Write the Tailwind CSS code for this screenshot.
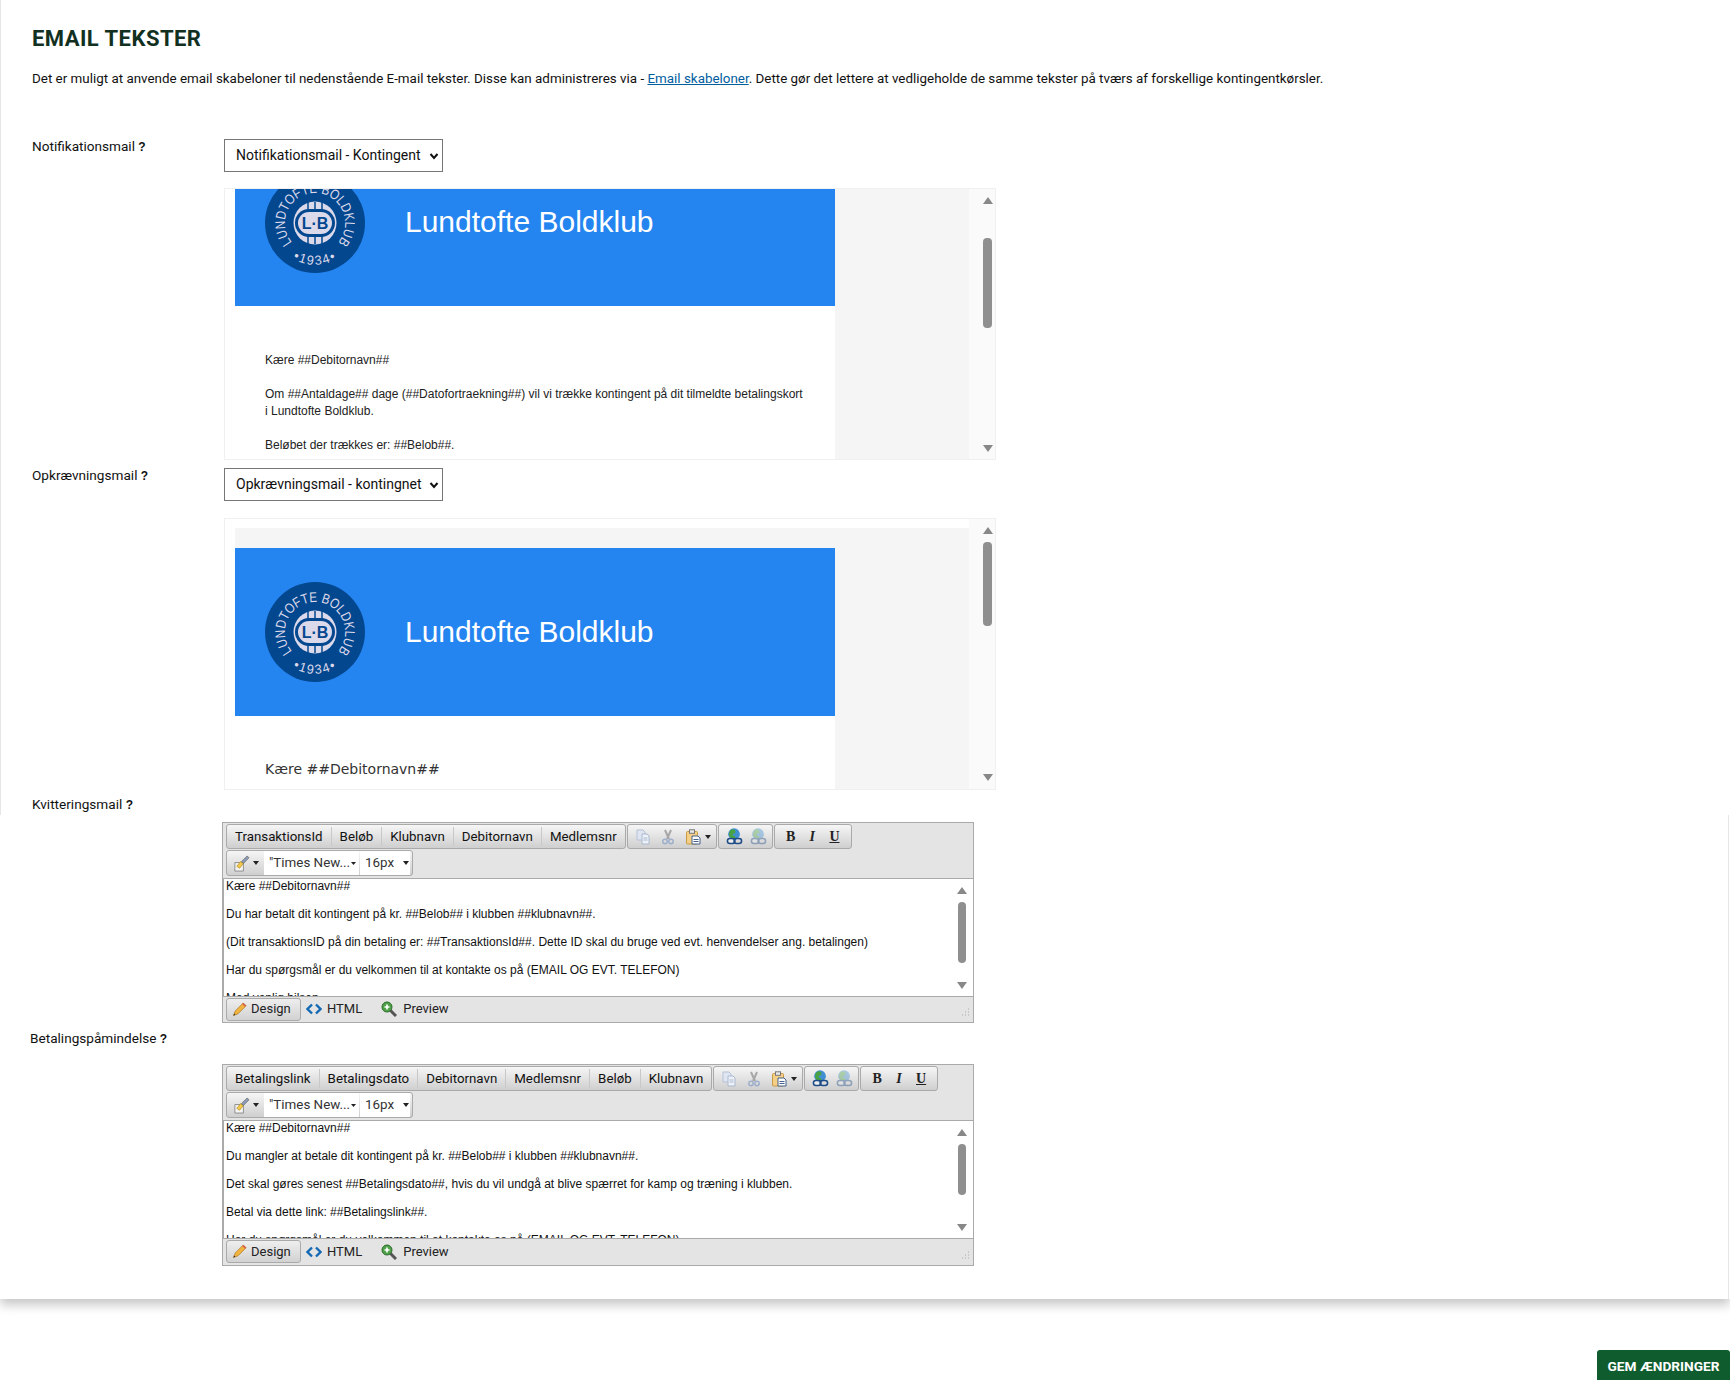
<!DOCTYPE html>
<html lang="da"><head><meta charset="utf-8"><title>Email tekster</title>
<script src="https://cdn.jsdelivr.net/npm/@tailwindcss/browser@4"></script></head>
<body class="bg-white font-['Roboto',sans-serif] text-[13.6px] text-[#111] h-[1380px] overflow-hidden relative">
<svg class="hidden" width="0" height="0">
<defs>
<symbol id="logo" viewBox="0 0 100 100">
<circle cx="50" cy="50" r="50" fill="#03478f"/>
<path id="arcT" d="M27 69.300 A30 30 0 1 1 73 69.300" fill="none"/>
<path id="arcB" d="M23 82 A42 42 0 0 0 77 82" fill="none"/>
<text font-family="Liberation Sans" font-size="14" fill="#dcd9ea" textLength="136" lengthAdjust="spacingAndGlyphs"><textPath href="#arcT" textLength="136" lengthAdjust="spacingAndGlyphs">LUNDTOFTE BOLDKLUB</textPath></text>
<text font-family="Liberation Sans" font-size="13" fill="#dcd9ea" letter-spacing="1.500"><textPath href="#arcB" startOffset="50%" text-anchor="middle">•1934•</textPath></text>
<circle cx="50" cy="50" r="21.500" fill="#dcd9ea"/>
<path d="M43 29v42M50 29v42M57 29v42" stroke="#03478f" stroke-width="1.500"/>
<rect x="30" y="36" width="40" height="28" rx="14" fill="#03478f"/>
<rect x="33" y="39" width="34" height="22" rx="11" fill="#dcd9ea"/>
<text x="50" y="56" text-anchor="middle" font-family="Liberation Sans" font-weight="700" font-size="16" fill="#03478f">L·B</text>
</symbol>
<symbol id="copy" viewBox="0 0 16 16"><path d="M2 1h6l2 2v8H2z" fill="#dfe6f2" stroke="#b6c2d6"/><path d="M7 5h5l2 2v8H7z" fill="#eef2f8" stroke="#a9b8d0"/><path d="M8.500 9h4M8.500 11h4" stroke="#a9b8d0"/></symbol>
<symbol id="cut" viewBox="0 0 16 16"><path d="M5 1l4 9M11 1L7 10" stroke="#a7a7a7" stroke-width="2"/><circle cx="5" cy="12.500" r="2.200" fill="none" stroke="#9fb0cc" stroke-width="1.500"/><circle cx="11" cy="12.500" r="2.200" fill="none" stroke="#9fb0cc" stroke-width="1.500"/></symbol>
<symbol id="paste" viewBox="0 0 16 16"><rect x="1.500" y="2.500" width="11" height="12.500" rx="1" fill="#f4cf85" stroke="#c99a45"/><rect x="4.500" y=".8" width="5" height="3.500" fill="#e9e9e9" stroke="#777"/><path d="M7 7h6l2 2v6H7z" fill="#fff" stroke="#45618c"/><path d="M8.500 10.500h5M8.500 12.500h5" stroke="#45618c"/></symbol>
<symbol id="link" viewBox="0 0 18 18"><circle cx="8.500" cy="6.500" r="6.200" fill="#3f8fd2"/><path d="M5 2c2-1 5-1 5 2S7 5 7 7s3 1 3 3l-3 2C3 10 2 5 5 2z" fill="#4aa343"/><rect x="1.500" y="11" width="8" height="5.500" rx="2.700" fill="#ffffff80" stroke="#1d4c86" stroke-width="1.600"/><rect x="8.500" y="11" width="8" height="5.500" rx="2.700" fill="none" stroke="#1d4c86" stroke-width="1.600"/></symbol>
<symbol id="brush" viewBox="0 0 18 18"><path d="M2 8h9v9H2z" fill="#f4f4f4" stroke="#8a8a8a"/><path d="M4 12l4-5 3 2-4 5z" fill="#f2c94c" stroke="#b58a1c" stroke-width=".7"/><path d="M9 7l6-6 2 2-6 6z" fill="#8c9db8" stroke="#555" stroke-width=".6"/></symbol>
<symbol id="pencil" viewBox="0 0 16 16"><path d="M1.500 14.500l2-5L12 1l3 3-8.500 8.500z" fill="#f0b43f" stroke="#a8701a" stroke-width=".7"/><path d="M11 2l3 3 1-1-3-3z" fill="#d9534f"/><path d="M1.500 14.500l.8-2.200 1.400 1.400z" fill="#333"/></symbol>
<symbol id="code" viewBox="0 0 16 12"><path d="M6 1.500L1.500 6 6 10.500M10 1.500L14.500 6 10 10.500" fill="none" stroke="#1469b4" stroke-width="2.400"/></symbol>
<symbol id="zoomi" viewBox="0 0 16 16"><path d="M9 9l6 6" stroke="#555" stroke-width="3"/><circle cx="6" cy="6" r="5" fill="#4fa24a" stroke="#2b6b2b"/><path d="M3.500 6h5M6 3.500v5" stroke="#fff" stroke-width="1.700"/></symbol>
</defs></svg>

<main class="h-[1299px] shadow-[0_6px_10px_rgba(0,0,0,0.22)]">
<div class="h-[815px] border-l border-[#e6e6e6] pl-[31px] pt-[25px]">
<h1 class="font-bold text-[22px] leading-[28px] text-[#12301f] tracking-[0.45px]">EMAIL TEKSTER</h1>
<p class="mt-[16px] leading-[20px] text-[13.4px]">Det er muligt at anvende email skabeloner til nedenstående E-mail tekster. Disse kan administreres via - <a class="text-[#005d9e] underline" href="#">Email skabeloner</a>. Dette gør det lettere at vedligeholde de samme tekster på tværs af forskellige kontingentkørsler.</p>

<section class="mt-[50px] flex">
<div class="w-[192px] leading-[20px] -mt-[3px]">Notifikationsmail <b class="font-['Liberation_Sans'] text-[12px] font-bold">?</b></div>
<div class="w-[772px]">
<div class="w-[219px] h-[33px] border border-[#767676] flex items-center justify-between pl-[11px] pr-[3px] text-[14px]"><span>Notifikationsmail - Kontingent</span><svg width="10" height="10" viewBox="0 0 10 10"><path d="M1.500 3L5 7l3.500-4" fill="none" stroke="#111" stroke-width="2"/></svg></div>
<div class="mt-[16px] h-[272px] border border-[#f0f0f0] flex overflow-hidden">
<div class="w-[745px] h-full overflow-hidden bg-white pl-[10px]"><div class="h-full bg-[#f5f5f5]">
<div class="w-[600px] h-full bg-white overflow-hidden">
<div class="h-[117px] bg-[#2585f0] flex items-start overflow-hidden"><svg class="w-[100px] h-[100px] ml-[30px] -mt-[16px] shrink-0"><use href="#logo"/></svg><span class="ml-[40px] mt-[15px] font-['Liberation_Sans'] text-[30px] leading-[36px] text-white">Lundtofte Boldklub</span></div>
<div class="font-['Liberation_Sans'] text-[12px] leading-[17px] text-[#222] pl-[30px] pr-[30px] pt-[46px]">
<p>Kære ##Debitornavn##</p>
<p class="mt-[17px]">Om ##Antaldage## dage (##Datofortraekning##) vil vi trække kontingent på dit tilmeldte betalingskort i Lundtofte Boldklub.</p>
<p class="mt-[17px]">Beløbet der trækkes er: ##Belob##.</p>
</div></div></div></div>
<div class="w-[26px] bg-[#fafafa] pl-[14px] flex flex-col pt-[8px]">
<svg width="10" height="7" viewBox="0 0 10 7"><path d="M5 0l5 7H0z" fill="#888"/></svg>
<div class="w-[9px] h-[90px] mt-[34px] rounded-[4px] bg-[#8f8f8f]"></div>
<svg class="mt-[117px]" width="10" height="7" viewBox="0 0 10 7"><path d="M5 7L10 0H0z" fill="#888"/></svg>
</div></div>
</div></section>

<section class="mt-[8px] flex">
<div class="w-[192px] leading-[20px] -mt-[3px]">Opkrævningsmail <b class="font-['Liberation_Sans'] text-[12px] font-bold">?</b></div>
<div class="w-[772px]">
<div class="w-[219px] h-[33px] border border-[#767676] flex items-center justify-between pl-[11px] pr-[3px] text-[14px]"><span>Opkrævningsmail - kontingnet</span><svg width="10" height="10" viewBox="0 0 10 10"><path d="M1.500 3L5 7l3.500-4" fill="none" stroke="#111" stroke-width="2"/></svg></div>
<div class="mt-[17px] h-[272px] border border-[#f0f0f0] flex overflow-hidden">
<div class="w-[745px] h-full overflow-hidden pt-[9px] pl-[10px]"><div class="h-full bg-[#f5f5f5] pt-[20px]">
<div class="w-[600px] h-full bg-white">
<div class="h-[168px] bg-[#2585f0] flex items-center"><svg class="w-[100px] h-[100px] ml-[30px] shrink-0"><use href="#logo"/></svg><span class="ml-[40px] font-['Liberation_Sans'] text-[30px] leading-[36px] text-white">Lundtofte Boldklub</span></div>
<p class="font-['DejaVu_Sans'] text-[14px] leading-[20px] text-[#333] pl-[30px] pt-[43px]">Kære ##Debitornavn##</p>
</div></div></div>
<div class="w-[26px] bg-[#fafafa] pl-[14px] flex flex-col pt-[8px]">
<svg width="10" height="7" viewBox="0 0 10 7"><path d="M5 0l5 7H0z" fill="#888"/></svg>
<div class="w-[9px] h-[84px] mt-[8px] rounded-[4px] bg-[#8f8f8f]"></div>
<svg class="mt-[148px]" width="10" height="7" viewBox="0 0 10 7"><path d="M5 7L10 0H0z" fill="#888"/></svg>
</div></div>
</div></section>

<div class="mt-[4px] leading-[20px]">Kvitteringsmail <b class="font-['Liberation_Sans'] text-[12px] font-bold">?</b></div>
</div>

<div class="h-[484px] border-r border-[#e6e6e6] mr-[1px] pl-[32px]">
<div class="pt-[7px] ml-[190px] w-[752px]">
<div class="h-[201px] border border-[#aaa] bg-[#e4e4e4] flex flex-col">
<div class="flex gap-[1px] h-[27px] pl-[3px] pt-[1px]">
<div class="h-[25px] flex items-center rounded-[3px] border border-[#aaa] bg-linear-to-b from-[#f6f6f6] to-[#cfcfcf] divide-x divide-[#c8c8c8] text-[13.3px]"><span class="px-[8px]">TransaktionsId</span><span class="px-[8px]">Beløb</span><span class="px-[8px]">Klubnavn</span><span class="px-[8px]">Debitornavn</span><span class="px-[8px]">Medlemsnr</span></div>
<div class="h-[25px] flex items-center gap-[9px] pl-[7px] pr-[5px] rounded-[3px] border border-[#aaa] bg-linear-to-b from-[#f6f6f6] to-[#cfcfcf]"><svg class="w-[16px] h-[16px]"><use href="#copy"/></svg><svg class="w-[16px] h-[16px]"><use href="#cut"/></svg><svg class="w-[16px] h-[16px]"><use href="#paste"/></svg><svg class="-ml-[5px]" width="6" height="4"><path d="M0 0h6L3 4z" fill="#222"/></svg></div>
<div class="h-[25px] flex items-center gap-[7px] pl-[7px] pr-[5px] rounded-[3px] border border-[#aaa] bg-linear-to-b from-[#f6f6f6] to-[#cfcfcf]"><svg class="w-[17px] h-[17px]"><use href="#link"/></svg><svg class="w-[17px] h-[17px] opacity-40"><use href="#link"/></svg></div>
<div class="h-[25px] w-[78px] flex items-center justify-around px-[4px] rounded-[3px] border border-[#aaa] bg-linear-to-b from-[#f6f6f6] to-[#cfcfcf] font-['Liberation_Serif'] text-[14px] text-[#222]"><b>B</b><b class="italic">I</b><b class="underline">U</b></div>
</div>
<div class="flex h-[28px] pl-[3px]"><div class="h-[26px] w-[187px] flex items-stretch rounded-[3px] border border-[#aaa] bg-linear-to-b from-[#f6f6f6] to-[#cfcfcf] overflow-hidden text-[13.4px] text-[#333]"><div class="w-[37px] flex items-center pl-[6px] gap-[3px]"><svg class="w-[17px] h-[17px]"><use href="#brush"/></svg><svg width="6" height="4"><path d="M0 0h6L3 4z" fill="#222"/></svg></div><div class="w-[95px] bg-white flex items-center pl-[5px] whitespace-nowrap">"Times New...<svg class="ml-[1px]" width="5" height="3"><path d="M0 0h5L2.500 3z" fill="#222"/></svg></div><div class="w-[50px] ml-[1px] bg-white flex items-center pl-[5px] gap-[9px]">16px<svg width="6" height="4"><path d="M0 0h6L3 4z" fill="#222"/></svg></div></div></div>
<div class="h-[119px] bg-white border border-[#aaa] border-r-0 flex overflow-hidden">
<div class="w-[727px] pl-[2px] font-['Liberation_Sans'] text-[12px] leading-[14px] text-[#111] shrink-0">
<p>Kære ##Debitornavn##</p><p class="mt-[14px]">Du har betalt dit kontingent på kr. ##Belob## i klubben ##klubnavn##.</p><p class="mt-[14px]">(Dit transaktionsID på din betaling er: ##TransaktionsId##. Dette ID skal du bruge ved evt. henvendelser ang. betalingen)</p><p class="mt-[14px]">Har du spørgsmål er du velkommen til at kontakte os på (EMAIL OG EVT. TELEFON)</p><p class="mt-[14px]">Med venlig hilsen</p>
</div>
<div class="flex-1 flex flex-col pl-[6px] pt-[8px]"><svg width="10" height="7" viewBox="0 0 10 7"><path d="M5 0l5 7H0z" fill="#888"/></svg><div class="w-[8px] h-[61px] mt-[8px] ml-[1px] rounded-[4px] bg-[#8f8f8f]"></div><svg class="mt-[19px]" width="10" height="7" viewBox="0 0 10 7"><path d="M5 7L10 0H0z" fill="#888"/></svg></div>
</div>
<div class="h-[24px] flex items-center pl-[3px] relative text-[13px] text-[#222]"><div class="h-[23px] w-[75px] flex items-center gap-[4px] pl-[5px] rounded-[3px] border border-[#aaa] bg-linear-to-b from-[#eee] to-[#d2d2d2]"><svg class="w-[15px] h-[15px]"><use href="#pencil"/></svg><span>Design</span></div><svg class="ml-[5px] w-[16px] h-[12px]"><use href="#code"/></svg><span class="ml-[5px]">HTML</span><svg class="ml-[19px] w-[16px] h-[16px]"><use href="#zoomi"/></svg><span class="ml-[6px]">Preview</span>
<svg class="absolute right-[3px] bottom-[3px]" width="10" height="10"><path d="M8 1h1M5 4h1M8 4h1M2 7h1M5 7h1M8 7h1" stroke="#aaa" stroke-width="1"/></svg></div>
</div>
</div>

<div class="mt-[5px] -ml-[2px] leading-[20px]">Betalingspåmindelse <b class="font-['Liberation_Sans'] text-[12px] font-bold">?</b></div>
<div class="mt-[15px] ml-[190px] w-[752px] h-[202px] border border-[#aaa] bg-[#e4e4e4] flex flex-col">
<div class="flex gap-[1px] h-[27px] pl-[3px] pt-[1px]">
<div class="h-[25px] flex items-center rounded-[3px] border border-[#aaa] bg-linear-to-b from-[#f6f6f6] to-[#cfcfcf] divide-x divide-[#c8c8c8] text-[13.3px]"><span class="px-[8px]">Betalingslink</span><span class="px-[8px]">Betalingsdato</span><span class="px-[8px]">Debitornavn</span><span class="px-[8px]">Medlemsnr</span><span class="px-[8px]">Beløb</span><span class="px-[8px]">Klubnavn</span></div>
<div class="h-[25px] flex items-center gap-[9px] pl-[7px] pr-[5px] rounded-[3px] border border-[#aaa] bg-linear-to-b from-[#f6f6f6] to-[#cfcfcf]"><svg class="w-[16px] h-[16px]"><use href="#copy"/></svg><svg class="w-[16px] h-[16px]"><use href="#cut"/></svg><svg class="w-[16px] h-[16px]"><use href="#paste"/></svg><svg class="-ml-[5px]" width="6" height="4"><path d="M0 0h6L3 4z" fill="#222"/></svg></div>
<div class="h-[25px] flex items-center gap-[7px] pl-[7px] pr-[5px] rounded-[3px] border border-[#aaa] bg-linear-to-b from-[#f6f6f6] to-[#cfcfcf]"><svg class="w-[17px] h-[17px]"><use href="#link"/></svg><svg class="w-[17px] h-[17px] opacity-40"><use href="#link"/></svg></div>
<div class="h-[25px] w-[78px] flex items-center justify-around px-[4px] rounded-[3px] border border-[#aaa] bg-linear-to-b from-[#f6f6f6] to-[#cfcfcf] font-['Liberation_Serif'] text-[14px] text-[#222]"><b>B</b><b class="italic">I</b><b class="underline">U</b></div>
</div>
<div class="flex h-[28px] pl-[3px]"><div class="h-[26px] w-[187px] flex items-stretch rounded-[3px] border border-[#aaa] bg-linear-to-b from-[#f6f6f6] to-[#cfcfcf] overflow-hidden text-[13.4px] text-[#333]"><div class="w-[37px] flex items-center pl-[6px] gap-[3px]"><svg class="w-[17px] h-[17px]"><use href="#brush"/></svg><svg width="6" height="4"><path d="M0 0h6L3 4z" fill="#222"/></svg></div><div class="w-[95px] bg-white flex items-center pl-[5px] whitespace-nowrap">"Times New...<svg class="ml-[1px]" width="5" height="3"><path d="M0 0h5L2.500 3z" fill="#222"/></svg></div><div class="w-[50px] ml-[1px] bg-white flex items-center pl-[5px] gap-[9px]">16px<svg width="6" height="4"><path d="M0 0h6L3 4z" fill="#222"/></svg></div></div></div>
<div class="h-[119px] bg-white border border-[#aaa] border-r-0 flex overflow-hidden">
<div class="w-[727px] pl-[2px] font-['Liberation_Sans'] text-[12px] leading-[14px] text-[#111] shrink-0">
<p>Kære ##Debitornavn##</p><p class="mt-[14px]">Du mangler at betale dit kontingent på kr. ##Belob## i klubben ##klubnavn##.</p><p class="mt-[14px]">Det skal gøres senest ##Betalingsdato##, hvis du vil undgå at blive spærret for kamp og træning i klubben.</p><p class="mt-[14px]">Betal via dette link: ##Betalingslink##.</p><p class="mt-[14px]">Har du spørgsmål er du velkommen til at kontakte os på (EMAIL OG EVT. TELEFON)</p>
</div>
<div class="flex-1 flex flex-col pl-[6px] pt-[8px]"><svg width="10" height="7" viewBox="0 0 10 7"><path d="M5 0l5 7H0z" fill="#888"/></svg><div class="w-[8px] h-[51px] mt-[8px] ml-[1px] rounded-[4px] bg-[#8f8f8f]"></div><svg class="mt-[29px]" width="10" height="7" viewBox="0 0 10 7"><path d="M5 7L10 0H0z" fill="#888"/></svg></div>
</div>
<div class="h-[25px] flex items-center pl-[3px] relative text-[13px] text-[#222]"><div class="h-[23px] w-[75px] flex items-center gap-[4px] pl-[5px] rounded-[3px] border border-[#aaa] bg-linear-to-b from-[#eee] to-[#d2d2d2]"><svg class="w-[15px] h-[15px]"><use href="#pencil"/></svg><span>Design</span></div><svg class="ml-[5px] w-[16px] h-[12px]"><use href="#code"/></svg><span class="ml-[5px]">HTML</span><svg class="ml-[19px] w-[16px] h-[16px]"><use href="#zoomi"/></svg><span class="ml-[6px]">Preview</span>
<svg class="absolute right-[3px] bottom-[3px]" width="10" height="10"><path d="M8 1h1M5 4h1M8 4h1M2 7h1M5 7h1M8 7h1" stroke="#aaa" stroke-width="1"/></svg></div>
</div>
</div>
</main>
<div class="mt-[51px] flex justify-end"><button class="w-[133px] h-[30px] pt-[2px] bg-[#0f5c2e] rounded-t-[3px] text-white font-bold text-[13.7px]">GEM ÆNDRINGER</button></div>
</body></html>
